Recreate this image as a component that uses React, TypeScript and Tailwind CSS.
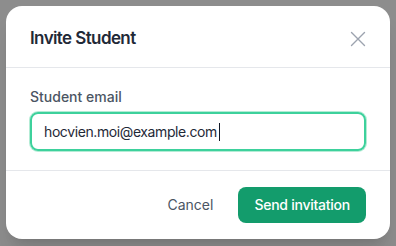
import React from "react";

export default function App() {
  return (
    <div
      className="w-[396px] h-[246px] bg-[#8d8d8d] pt-[6px] overflow-hidden"
      style={{ fontFamily: "Inter, 'Noto Sans', sans-serif" }}
    >
      <div className="mx-auto w-[384px] rounded-2xl bg-white shadow-xl">
        <div className="flex items-center justify-between px-6 h-[62px] pt-[5px] border-b border-[#e5e7eb]">
          <h2 className="text-[17px] font-semibold text-[#1f2937] tracking-[-0.6px]">Invite Student</h2>
          <button className="text-[#9ca3af]">
            <svg width="16" height="16" viewBox="0 0 16 16" fill="none" stroke="currentColor" strokeWidth="1.4" strokeLinecap="round">
              <path d="M1.5 1.5 14.5 14.5M14.5 1.5 1.5 14.5" />
            </svg>
          </button>
        </div>
        <div className="px-6 pt-[19px] pb-[19px] border-b border-[#e5e7eb]">
          <label className="block text-sm font-medium text-[#4b5563] leading-5 mb-[5px]">Student email</label>
          <div className="flex items-center h-[39px] rounded-lg border-2 border-[#3dd19c] shadow-[0_0_0_1px_#b3ecd5] px-3 text-[14px] tracking-[-0.4px] text-[#1f2937]">
            <span>hocvien.moi@example.com</span>
            <span className="ml-[2px] inline-block w-[1px] h-[18px] bg-[#111827]" />
          </div>
        </div>
        <div className="flex items-center justify-end gap-[9px] px-6 py-4">
          <button className="px-4 h-9 text-sm font-normal text-[#4b5563]">Cancel</button>
          <button className="px-4 h-9 rounded-lg bg-[#139c6c] text-sm font-medium tracking-[-0.25px] text-white">Send invitation</button>
        </div>
      </div>
    </div>
  );
}
